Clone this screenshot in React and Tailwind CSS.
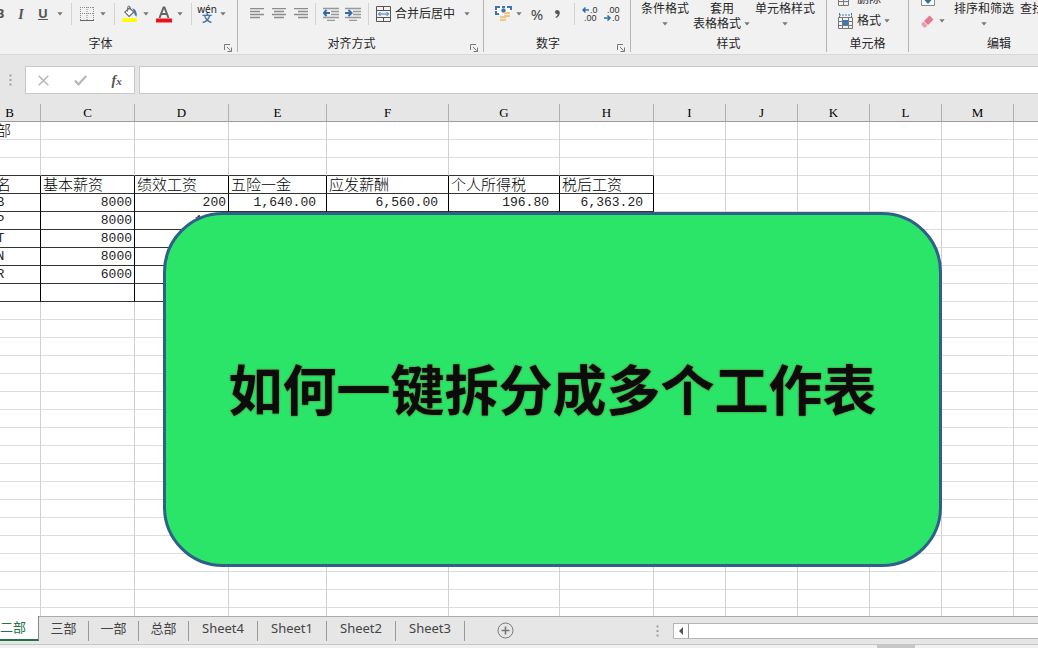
import { clsx } from 'clsx';

const COLUMNS = [
  { name: 'B', width: 'w-[62px]' },
  { name: 'C', width: 'w-[94px]' },
  { name: 'D', width: 'w-[94px]' },
  { name: 'E', width: 'w-[98px]' },
  { name: 'F', width: 'w-[122px]' },
  { name: 'G', width: 'w-[111px]' },
  { name: 'H', width: 'w-[94px]' },
  { name: 'I', width: 'w-[72px]' },
  { name: 'J', width: 'w-[72px]' },
  { name: 'K', width: 'w-[72px]' },
  { name: 'L', width: 'w-[72px]' },
  { name: 'M', width: 'w-[72px]' },
  { name: 'N', width: 'w-[72px]' },
];

const DATA = [
  ['二部'],
  [],
  [],
  ['姓名', '基本薪资', '绩效工资', '五险一金', '应发薪酬', '个人所得税', '税后工资'],
  ['BBB', '8000', '200', '1,640.00', '6,560.00', '196.80', '6,363.20'],
  ['PPP', '8000', '1000'],
  ['TTT', '8000'],
  ['NNN', '8000'],
  ['RRR', '6000'],
  [],
];

const ROW_COUNT = 40;
const SHEETS = ['二部', '三部', '一部', '总部', 'Sheet4', 'Sheet1', 'Sheet2', 'Sheet3'];

const Caret = ({ label }) => (
  <button aria-label={label} className="flex h-3 w-2 shrink-0 items-center justify-center">
    <svg width="6" height="4" viewBox="0 0 6 4">
      <path d="M0.3 0.3H5.7L3 3.6Z" fill="#777" />
    </svg>
  </button>
);

const Separator = () => <div className="mx-[7px] h-[22px] w-px shrink-0 bg-[#d2d2d2]" />;

const Tool = ({ label, className, children }) => (
  <button aria-label={label} className={clsx('flex h-6 shrink-0 items-center justify-center', className)}>
    {children}
  </button>
);

const Group = ({ title, launcher, className, children }) => (
  <section className={clsx('flex h-[52px] shrink-0 flex-col border-r border-[#b4b4b4]', className)}>
    <div className="flex h-9 pt-px">{children}</div>
    <div className="flex h-4 items-center">
      <span className="flex-1 text-center">{title}</span>
      {launcher && (
        <button aria-label={`${title}设置`} className="flex h-4 w-[18px] items-end justify-center">
          <svg width="8" height="8" viewBox="0 0 8 8" fill="none" stroke="#777">
            <path d="M0.5 6V0.5H6M3 3L6.5 6.5M7.5 3.5V7.5H3.5" />
          </svg>
        </button>
      )}
    </div>
  </section>
);

const AlignIcon = ({ path }) => (
  <svg width="14" height="12" viewBox="0 0 14 12" stroke="#8c8c8c" strokeWidth="1.3" fill="none">
    <path d={path} />
  </svg>
);

const IndentIcon = ({ right }) => (
  <svg width="16" height="14" viewBox="0 0 16 14" fill="none">
    <path d="M0 1.5H16M8 4.5H16M8 7.5H16M0 10.5H16M4 13.5H12" stroke="#999" strokeWidth="1.3" />
    {right ? (
      <path d="M0 6H6M3.5 3L6.5 6L3.5 9" stroke="#2f6ea8" strokeWidth="2" />
    ) : (
      <path d="M7 6H1M3.5 3L0.8 6L3.5 9" stroke="#2f6ea8" strokeWidth="2" />
    )}
  </svg>
);

const DecimalIcon = ({ more }) => (
  <svg width="16" height="16" viewBox="0 0 16 16" fontFamily="Liberation Sans, sans-serif" fontSize="9" fill="#333">
    <text x={more ? 8 : 3} y="7">{more ? '.0' : '.00'}</text>
    <text x={more ? 2 : 8} y="15">{more ? '.00' : '.0'}</text>
    {more ? (
      <path d="M7 4H1M3.5 1.5L1 4L3.5 6.5" stroke="#2f6ea8" strokeWidth="1.5" fill="none" />
    ) : (
      <path d="M0 12H6M3.5 9.5L6 12L3.5 14.5" stroke="#2f6ea8" strokeWidth="1.5" fill="none" />
    )}
  </svg>
);

const TextMenu = ({ lines }) => (
  <div className="flex flex-col items-center leading-[15px] whitespace-nowrap">
    <button>{lines[0]}</button>
    <div className="flex h-[15px] items-center gap-0.5">
      {lines[1] && <button>{lines[1]}</button>}
      <Caret label={`${lines.join('')}选项`} />
    </div>
  </div>
);

const Ribbon = () => (
  <header className="flex h-[55px] shrink-0 overflow-hidden border-b border-[#d9d9d9] bg-[#f1f1f1] text-[12px] text-[#262626]">
    <Group title="字体" launcher className="-ml-[18px] w-[256px]">
      <div className="flex h-[26px] items-center pl-[6px]">
        <Tool label="加粗" className="w-6 text-[13px] font-bold text-[#555]">B</Tool>
        <Tool label="倾斜" className="w-[18px] font-['Liberation_Serif',serif] text-[14px] font-bold italic text-[#555]">I</Tool>
        <Tool label="下划线" className="w-[26px] text-[13px] font-bold text-[#555] underline">U</Tool>
        <Caret label="下划线选项" />
        <Separator />
        <div className="flex items-center gap-1">
          <Tool label="边框" className="w-4">
            <svg width="14" height="14" viewBox="0 0 14 14" stroke="#8a8a8a" fill="none">
              <path d="M0.5 0V13M13.5 0V13M7 0V13M0 0.5H14M0 6.5H14" strokeDasharray="1 1" />
              <path d="M0 13.5H14" stroke="#666" />
            </svg>
          </Tool>
          <Caret label="边框选项" />
        </div>
        <Separator />
        <div className="flex items-center gap-1">
          <Tool label="填充颜色" className="w-4">
            <svg width="17" height="18" viewBox="0 0 17 18" fill="none">
              <path d="M3 7L8 2.5L12.5 7L7.5 11.5Z" fill="#fff" stroke="#666" strokeWidth="1.2" />
              <path d="M6 6.5V2Q6 0.6 7.3 0.6T8.6 2V5" stroke="#666" />
              <path d="M11 3Q16.5 4.5 15.5 12Q13 10.5 12.5 7Z" fill="#4a78a8" />
              <path d="M0 13.5H16V17.5H0Z" fill="#ffff00" />
            </svg>
          </Tool>
          <Caret label="填充颜色选项" />
        </div>
        <div className="ml-1.5 flex items-center gap-1">
          <Tool label="字体颜色" className="w-4">
            <svg width="16" height="18" viewBox="0 0 16 18" fill="none">
              <path d="M3.5 13L7.5 2.5H8.5L12.5 13M5 9H11" stroke="#666" strokeWidth="2" />
              <path d="M0 13.5H16V17.5H0Z" fill="#e81416" />
            </svg>
          </Tool>
          <Caret label="字体颜色选项" />
        </div>
        <Separator />
        <div className="flex items-center gap-1">
          <Tool label="显示拼音" className="w-4 flex-col text-[10px] leading-[9px]">
            <span>wén</span>
            <span className="font-bold text-[#4176ab]">文</span>
          </Tool>
          <Caret label="拼音选项" />
        </div>
      </div>
    </Group>

    <Group title="对齐方式" launcher className="w-[246px]">
      <div className="flex h-[26px] items-center pl-3">
        <div className="flex gap-2">
          <Tool label="左对齐"><AlignIcon path="M0 0.5H14M0 3.5H10M0 6.5H14M0 9.5H10" /></Tool>
          <Tool label="居中"><AlignIcon path="M0 0.5H14M2 3.5H12M0 6.5H14M2 9.5H12" /></Tool>
          <Tool label="右对齐"><AlignIcon path="M0 0.5H14M4 3.5H14M0 6.5H14M4 9.5H14" /></Tool>
        </div>
        <Separator />
        <div className="flex gap-1.5">
          <Tool label="减少缩进量"><IndentIcon /></Tool>
          <Tool label="增加缩进量"><IndentIcon right /></Tool>
        </div>
        <Separator />
        <button className="flex items-center gap-1">
          <svg width="15" height="16" viewBox="0 0 15 16" fill="none" stroke="#555">
            <path d="M0.5 0.5H14.5V15.5H0.5ZM0.5 4.5H14.5M0.5 11.5H14.5M7.5 0.5V4.5M7.5 11.5V15.5" />
            <path d="M2.5 8H12.5M4.5 6L2.5 8L4.5 10M10.5 6L12.5 8L10.5 10" stroke="#3c78b4" />
          </svg>
          合并后居中
        </button>
        <div className="ml-2"><Caret label="合并选项" /></div>
      </div>
    </Group>

    <Group title="数字" launcher className="w-[147px]">
      <div className="flex h-[26px] items-center pl-[11px]">
        <Tool label="会计数字格式">
          <svg width="17" height="18" viewBox="0 0 17 18" fill="none">
            <path d="M1 2H16V9H1Z" fill="#fff" />
            <path d="M5 2H1V5M12 2H16V5M1 6V9H4M7 2H10" stroke="#4176ab" strokeWidth="2" />
            <circle cx="8.5" cy="5.5" r="2.2" fill="#4176ab" />
            <path d="M9 7H15V12H9Z" fill="#eec68b" />
            <path d="M5 11H11V16H5Z" fill="#eec68b" />
            <path d="M9 9.5H15M5 13.5H11" stroke="#f8e6cc" />
          </svg>
        </Tool>
        <div className="ml-[3px]"><Caret label="会计格式选项" /></div>
        <Tool label="百分比样式" className="ml-1.5 w-4 text-[15px] text-[#444]">%</Tool>
        <Tool label="千位分隔样式" className="ml-2 w-2">
          <svg width="5" height="8" viewBox="0 0 5 8">
            <path d="M0 2Q0 0 2.3 0T4.8 2.5Q4.8 6 1 8L0.5 7Q2.5 6 2.7 4Q0 4.4 0 2Z" fill="#555" />
          </svg>
        </Tool>
        <div className="ml-1.5"><Separator /></div>
        <div className="flex gap-1.5">
          <Tool label="增加小数位数"><DecimalIcon more /></Tool>
          <Tool label="减少小数位数"><DecimalIcon /></Tool>
        </div>
      </div>
    </Group>

    <Group title="样式" className="w-[196px]">
      <div className="flex gap-1 pl-[10px]">
        <TextMenu lines={['条件格式']} />
        <TextMenu lines={['套用', '表格格式']} />
        <TextMenu lines={['单元格样式']} />
      </div>
    </Group>

    <Group title="单元格" className="w-[82px]">
      <div className="-mt-[13px] pl-[11px]">
        <button className="flex h-[22px] items-center gap-1">
          <svg width="15" height="16" viewBox="0 0 15 16" fill="none" stroke="#777">
            <path d="M0.5 1.5H10.5V14.5H0.5ZM0.5 10.5H10.5M5.5 1.5V14.5" />
          </svg>
          删除
        </button>
        <div className="flex h-[22px] items-center gap-0.5">
          <button className="flex items-center gap-1">
            <svg width="15" height="16" viewBox="0 0 15 16" fill="none" stroke="#777">
              <path d="M0.5 4.5H14.5V15.5H0.5ZM0.5 8.5H14.5M0.5 12.5H14.5M4.5 4.5V15.5M10.5 4.5V15.5" />
              <path d="M1 2H14M1.5 0V4M13.5 0V4" stroke="#3c78b4" strokeDasharray="2 1" />
              <path d="M5 7H10V12H5Z" fill="#3c78b4" stroke="none" />
            </svg>
            格式
          </button>
          <Caret label="格式选项" />
        </div>
      </div>
    </Group>

    <Group title="编辑" className="w-[181px]">
      <div className="-mt-[13px] pl-3">
        <Tool label="填充" className="h-[22px]">
          <svg width="14" height="14" viewBox="0 0 14 14" fill="none">
            <path d="M0.5 0.5H13.5V13.5H0.5Z" stroke="#888" fill="#fff" />
            <path d="M7 2V8M3 7H11L7 11.5Z" fill="#2f6e96" stroke="#2f6e96" />
          </svg>
        </Tool>
        <div className="flex h-[22px] items-center gap-1">
          <Tool label="清除">
            <svg width="13" height="13" viewBox="0 0 13 13">
              <path d="M8.5 0.5L12.5 4.5L7 10L3 6Z" fill="#e8798c" />
              <path d="M2.4 6.6L6.4 10.6L4.5 12.5H3L0.5 10V8.5Z" fill="#ee9dab" />
            </svg>
          </Tool>
          <Caret label="清除选项" />
        </div>
      </div>
      <div className="flex gap-1.5 pl-2">
        <TextMenu lines={['排序和筛选']} />
        <TextMenu lines={['查找和选择']} />
      </div>
    </Group>
  </header>
);

const Dots = () => (
  <svg width="3" height="12" viewBox="0 0 3 12" fill="#a0a0a0">
    <path d="M0.5 0.5h2v2h-2zM0.5 5h2v2h-2zM0.5 9.5h2v2h-2z" />
  </svg>
);

const FormulaBar = () => (
  <div className="flex shrink-0 items-center gap-1 pt-[11px] pb-[10px]">
    <div className="flex w-[21px] justify-center"><Dots /></div>
    <div className="flex h-7 w-[110px] items-center justify-around border border-[#c8c8c8] bg-white">
      <button aria-label="取消">
        <svg width="11" height="11" viewBox="0 0 11 11" stroke="#b8b8b8" strokeWidth="1.6">
          <path d="M0.7 0.7L10.3 10.3M10.3 0.7L0.7 10.3" />
        </svg>
      </button>
      <button aria-label="输入">
        <svg width="13" height="11" viewBox="0 0 13 11" stroke="#b8b8b8" strokeWidth="2.2" fill="none">
          <path d="M0.8 5.5L4.5 9.3L12.2 1" />
        </svg>
      </button>
      <button className="font-['Liberation_Serif',serif] text-[14px] font-bold italic text-[#555]">
        f<span className="text-[11px]">x</span>
      </button>
    </div>
    <input aria-label="编辑栏" className="h-7 min-w-0 flex-1 border border-r-0 border-[#c8c8c8] bg-white px-2 outline-none" />
  </div>
);

const Cell = ({ row, col }) => {
  const value = DATA[row]?.[col] ?? '';
  const numeric = row > 3 && col > 0;
  const inTable = col < 7 && row >= 3 && row <= 9;
  const underlined = col < 7 && row >= 2 && row <= 9;
  return (
    <td
      className={clsx(
        'h-[18px] overflow-hidden border-r border-b p-0 whitespace-nowrap',
        inTable ? 'border-r-black' : 'border-r-[#d0d0d0]',
        underlined ? 'border-b-[#333]' : 'border-b-[#dcdcdc]',
        row < 4
          ? 'text-[15px] leading-[17px] font-light'
          : "pt-px font-['Liberation_Mono',monospace] text-[13px] leading-4 text-[#222]",
        numeric ? 'text-right' : 'pl-0.5 text-left',
        numeric && (col > 2 ? 'pr-[10px]' : 'pr-0.5'),
      )}
    >
      {value}
    </td>
  );
};

const Sheet = () => (
  <main className="relative min-h-0 flex-1 overflow-hidden bg-white">
    <table className="-ml-[21px] w-[1037px] min-w-[calc(100%+21px)] table-fixed border-separate border-spacing-0 text-black">
      <thead>
        <tr>
          {COLUMNS.map(({ name, width }) => (
            <th
              key={name}
              className={clsx(
                "h-[18px] border-r border-b border-r-[#b0b0b0] border-b-[#9c9c9c] bg-[#e6e6e6] p-0 pt-px font-['Liberation_Serif',serif] text-[13px] leading-4 font-normal",
                width,
              )}
            >
              {name}
            </th>
          ))}
        </tr>
      </thead>
      <tbody>
        {Array.from({ length: ROW_COUNT }, (_, row) => (
          <tr key={row}>
            {COLUMNS.map(({ name }, col) => <Cell key={name} row={row} col={col} />)}
          </tr>
        ))}
      </tbody>
    </table>

    <div className="absolute top-[108px] left-[163px] flex h-[355px] w-[779px] items-center justify-center rounded-[60px] border-3 border-[#2f5f8a] bg-[#2ae567]">
      <h1 className="text-[54px] leading-none font-bold whitespace-nowrap text-[#0c0c0c] [text-shadow:0_0_2px_#7a4a1c]">
        如何一键拆分成多个工作表
      </h1>
    </div>
  </main>
);

const SheetTabs = () => (
  <nav className="flex h-[29px] shrink-0 items-start border-t border-b border-t-[#ababab] border-b-[#c6c6c6] text-[13px] text-[#444]">
    {SHEETS.map((name, i) =>
      i === 0 ? (
        <button key={name} className="-mt-px h-[25px] w-[39px] border-r border-b-2 border-r-[#888] border-b-[#217346] bg-white pr-3 text-right text-[#217346]">
          {name}
        </button>
      ) : (
        <div key={name} className="flex h-6 items-center">
          <button className={clsx('h-6', i < 4 ? 'w-[49px]' : 'w-[68px]')}>{name}</button>
          <div className="mt-1 h-5 w-px bg-[#999]" />
        </div>
      ),
    )}
    <button aria-label="新工作表" className="mt-[5px] ml-8">
      <svg width="17" height="17" viewBox="0 0 17 17" fill="none" stroke="#777">
        <circle cx="8.5" cy="8.5" r="7.5" />
        <path d="M8.5 4.5V12.5M4.5 8.5H12.5" strokeWidth="1.6" />
      </svg>
    </button>
    <div className="mt-2 ml-[142px]"><Dots /></div>
    <div className="mt-1.5 ml-[14px] flex h-4 flex-1 border-y border-l border-[#b5b5b5] bg-white">
      <button aria-label="向左滚动" className="flex w-[15px] items-center justify-center border-r border-[#999]">
        <svg width="4" height="8" viewBox="0 0 4 8">
          <path d="M4 0V8L0 4Z" fill="#555" />
        </svg>
      </button>
    </div>
  </nav>
);

export default function App() {
  return (
    <div className="flex h-screen flex-col overflow-hidden bg-[#e6e6e6] font-['Noto_Sans','Noto_Sans_CJK_SC',sans-serif]">
      <Ribbon />
      <FormulaBar />
      <Sheet />
      <SheetTabs />
      <footer className="flex h-[3px] shrink-0 justify-end bg-[#f1f1f1]">
        <div className="mr-[123px] w-[38px] bg-[#c6c6c6]" />
      </footer>
    </div>
  );
}
